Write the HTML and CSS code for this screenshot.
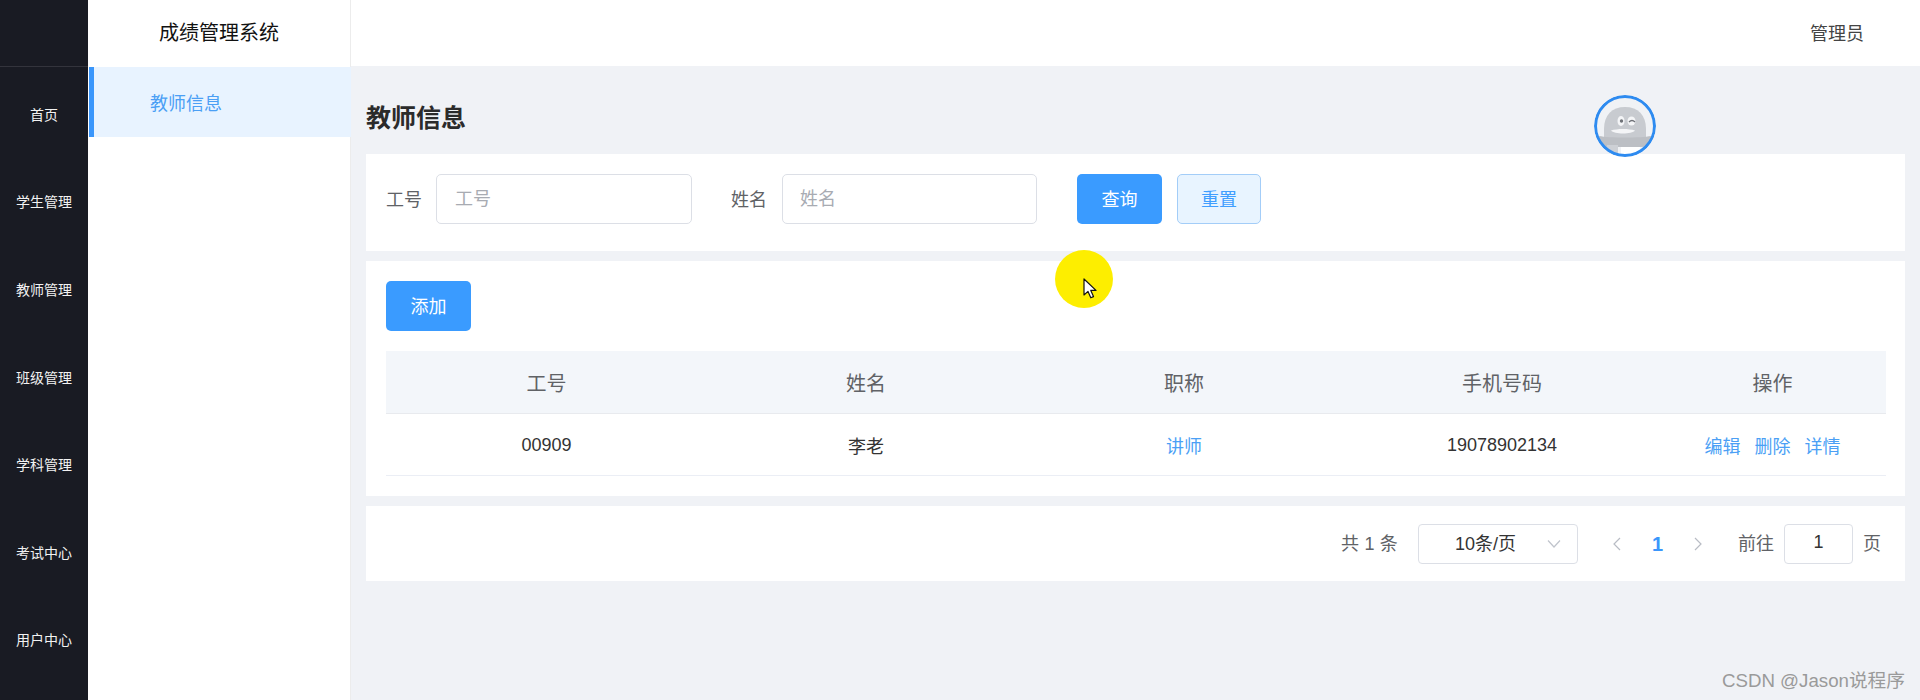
FILE: index.html
```html
<!DOCTYPE html>
<html lang="zh-CN">
<head>
<meta charset="utf-8">
<title>教师信息</title>
<link rel="stylesheet" href="styles.css">
</head>
<body>
<div class="app">
  <nav class="rail">
    <div class="rail-top"></div>
    <a class="rail-item">首页</a>
    <a class="rail-item">学生管理</a>
    <a class="rail-item">教师管理</a>
    <a class="rail-item">班级管理</a>
    <a class="rail-item">学科管理</a>
    <a class="rail-item">考试中心</a>
    <a class="rail-item">用户中心</a>
  </nav>
  <div class="shell">
    <header class="topbar">
      <div class="brand">成绩管理系统</div>
      <div class="user">管理员</div>
    </header>
    <div class="body">
      <aside class="side">
        <div class="side-item">教师信息</div>
      </aside>
      <main class="main">
        <h1 class="page-title">教师信息</h1>
        <section class="card search">
          <label class="field-label">工号</label>
          <div class="input input-wide"><span class="ph">工号</span></div>
          <label class="field-label field-label-second">姓名</label>
          <div class="input input-wide input-second"><span class="ph">姓名</span></div>
          <button class="btn btn-primary btn-query">查询</button>
          <button class="btn btn-plain">重置</button>
        </section>
        <section class="card list">
          <button class="btn btn-primary">添加</button>
          <table class="table">
            <colgroup>
              <col class="col-a"><col class="col-b"><col class="col-b"><col class="col-b"><col class="col-c">
            </colgroup>
            <thead>
              <tr><th>工号</th><th>姓名</th><th>职称</th><th>手机号码</th><th>操作</th></tr>
            </thead>
            <tbody>
              <tr>
                <td>00909</td>
                <td>李老</td>
                <td class="link">讲师</td>
                <td>19078902134</td>
                <td class="actions"><span>编辑</span><span>删除</span><span>详情</span></td>
              </tr>
            </tbody>
          </table>
        </section>
        <section class="card pager">
          <span class="total">共 1 条</span>
          <div class="select">
            <span>10条/页</span>
            <svg class="chev" width="16" height="10" viewBox="0 0 16 10"><path d="M2 1.500 8 8l6-6.500" fill="none" stroke="#c0c4cc" stroke-width="1.200"/></svg>
          </div>
          <svg class="arrow arrow-prev" width="8" height="14" viewBox="0 0 8 14"><path d="M7 1 1 7l6 6" fill="none" stroke="#b8bcc4" stroke-width="1.200"/></svg>
          <span class="page-now">1</span>
          <svg class="arrow arrow-next" width="8" height="14" viewBox="0 0 8 14"><path d="m1 1 6 6-6 6" fill="none" stroke="#b8bcc4" stroke-width="1.200"/></svg>
          <span class="goto">前往</span>
          <div class="page-input">1</div>
          <span class="goto-end">页</span>
        </section>
      </main>
    </div>
  </div>
</div>

<div class="avatar">
  <svg width="62" height="62" viewBox="0 0 62 62">
    <defs><clipPath id="av"><circle cx="31" cy="31" r="29"/></clipPath></defs>
    <rect width="62" height="62" fill="#f0f2f5"/>
    <g clip-path="url(#av)">
      <rect y="59" width="62" height="3" fill="#fff"/>
      <path d="M10 44V34C10 20 18 12 31 12s21 8 21 22v10z" fill="#c8cbd0"/>
      <path d="M5 41c10 2 42 2 52 0v9c-4 2-9 2-14 2H20c-6 0-11 0-15-2z" fill="#bcbfc4"/>
      <path d="M13 50h11v12H13z" fill="#cdd0d5"/>
      <path d="M27 52h19v10H27z" fill="#fff"/>
      <ellipse cx="27" cy="26" rx="3.500" ry="5" fill="#f4f5f7"/>
      <ellipse cx="37.500" cy="26" rx="4" ry="4.500" fill="#f4f5f7"/>
      <circle cx="27.500" cy="26" r="1.700" fill="#6f7278"/>
      <path d="M35 27c2-2 4-2 6 0" fill="none" stroke="#6f7278" stroke-width="1.400"/>
      <path d="M17 35.500c6-2 18-2 24 0-3 4-21 4-24 0z" fill="#f4f5f7"/>
    </g>
    <circle cx="31" cy="31" r="29.500" fill="none" stroke="#2e8bf0" stroke-width="3"/>
  </svg>
</div>

<div class="pointer">
  <svg class="cursor" width="15" height="22" viewBox="0 0 15 22"><path d="M1 1v16l4-3.600 2.800 6.400 2.700-1.200-2.700-6.200H13z" fill="#fff" stroke="#111" stroke-width="1.200" stroke-linejoin="round"/></svg>
</div>

<div class="watermark">CSDN @Jason说程序</div>
</body>
</html>
```
FILE: styles.css
```css
* { box-sizing: border-box; }
html, body { margin: 0; height: 100%; overflow: hidden; }
body {
  font-family: "Liberation Sans", "Noto Sans CJK SC", sans-serif;
  font-size: 18px;
  color: #333;
  background: #f0f2f6;
}
.app { display: flex; height: 700px; }

.rail { width: 88px; flex: none; background: #191b23; color: #f2f2f2; display: flex; flex-direction: column; }
.rail-top { height: 67px; flex: none; border-bottom: 1px solid #33343c; }
.rail-item { height: 87.6px; flex: none; display: flex; align-items: center; justify-content: center; font-size: 14px; padding-bottom: 6px; }
.rail-item:first-of-type { margin-top: 6px; }

.shell { flex: 1; min-width: 0; display: flex; flex-direction: column; }
.topbar { height: 66px; flex: none; background: #fff; display: flex; align-items: center; justify-content: space-between; }
.brand { width: 263px; height: 100%; border-right: 1px solid #ececec; font-size: 20px; color: #111; display: flex; align-items: center; justify-content: center; padding-bottom: 3px; }
.user { color: #444; margin-right: 56px; margin-bottom: 3px; font-size: 18px; }

.body { flex: 1; display: flex; min-height: 0; }
.side { width: 263px; flex: none; background: #fff; border-right: 1px solid #ececec; padding: 1px 0 0 1px; }
.side-item { height: 70px; background: #e8f3ff; border-left: 5px solid #3a96fb; color: #4b9ff5; display: flex; align-items: center; padding-left: 56px; font-size: 18px; margin-right: -1px; }

.main { flex: 1; min-width: 0; padding: 0 15px; }
.page-title { margin: 0; height: 88px; padding-top: 33px; font-size: 25px; line-height: 38px; font-weight: 700; color: #2b2b2b; }
.card { background: #fff; margin-bottom: 10px; }

.search { height: 97px; padding: 20px; display: flex; align-items: flex-start; }
.field-label { width: 50px; flex: none; line-height: 50px; color: #606266; padding-top: 1px; }
.field-label-second { width: 51px; margin-left: 39px; }
.input { height: 50px; border: 1px solid #dcdfe6; border-radius: 5px; display: flex; align-items: center; padding-left: 18px; padding-bottom: 4px; }
.input-wide { width: 256px; }
.input-second { width: 255px; padding-left: 17px; }
.ph { color: #a8abb2; }

.btn { height: 50px; width: 85px; border: 1px solid transparent; border-radius: 5px; font: inherit; padding: 0 0 3px; display: inline-block; }
.btn-primary { background: #3a9bff; color: #fff; }
.btn-plain { width: 84px; margin-left: 15px; background: #e8f4ff; border-color: #a3cdf8; color: #409eff; }
.btn-query { margin-left: 40px; }

.list { height: 235px; padding: 20px; }
.table { width: 1500px; margin-top: 20px; border-collapse: collapse; table-layout: fixed; }
.col-a { width: 321px; }
.col-b { width: 318px; }
.col-c { width: 225px; }
.table th { height: 62px; background: #f3f6fa; color: #606266; font-size: 20px; font-weight: 400; border-bottom: 1px solid #e8eaee; padding: 2px 0 0; }
.table td { height: 62px; text-align: center; color: #333; border-bottom: 1px solid #ebeef5; padding: 2px 0 0; }
.table th:last-child, .table td:last-child { padding-right: 2px; }
.table .link { color: #4b9ff5; }
.table .actions { color: #4b9ff5; }
.actions span { margin: 0 7px; }

.pager { height: 75px; padding: 18px 24px 0 0; display: flex; align-items: flex-start; justify-content: flex-end; color: #606266; line-height: 40px; }
.total { margin-right: 20px; letter-spacing: 0.2px; }
.select { width: 160px; height: 40px; border: 1px solid #dcdfe6; border-radius: 4px; display: flex; align-items: center; justify-content: space-between; padding: 0 15px 0 36px; color: #333; }
.arrow { margin-top: 13px; flex: none; }
.arrow-prev { margin-left: 35px; }
.page-now { width: 75px; text-align: center; color: #3a96fb; font-size: 20px; font-weight: 700; margin: 0 -1px; }
.arrow-next { margin-right: 36px; }
.goto { margin-right: 10px; }
.page-input { width: 69px; height: 40px; border: 1px solid #dcdfe6; border-radius: 4px; text-align: center; color: #333; line-height: 35px; }
.goto-end { margin-left: 10px; }

.avatar { position: absolute; left: 1594px; top: 95px; width: 62px; height: 62px; border-radius: 50%; overflow: hidden; }
.avatar svg { display: block; }

.pointer { position: absolute; left: 1055px; top: 250px; width: 58px; height: 58px; border-radius: 50%; background: #fdee00; }
.cursor { position: absolute; left: 28px; top: 28px; display: block; }

.watermark { position: absolute; right: 15px; top: 668px; font-size: 18.7px; line-height: 26px; color: #9a9a9a; }
```
